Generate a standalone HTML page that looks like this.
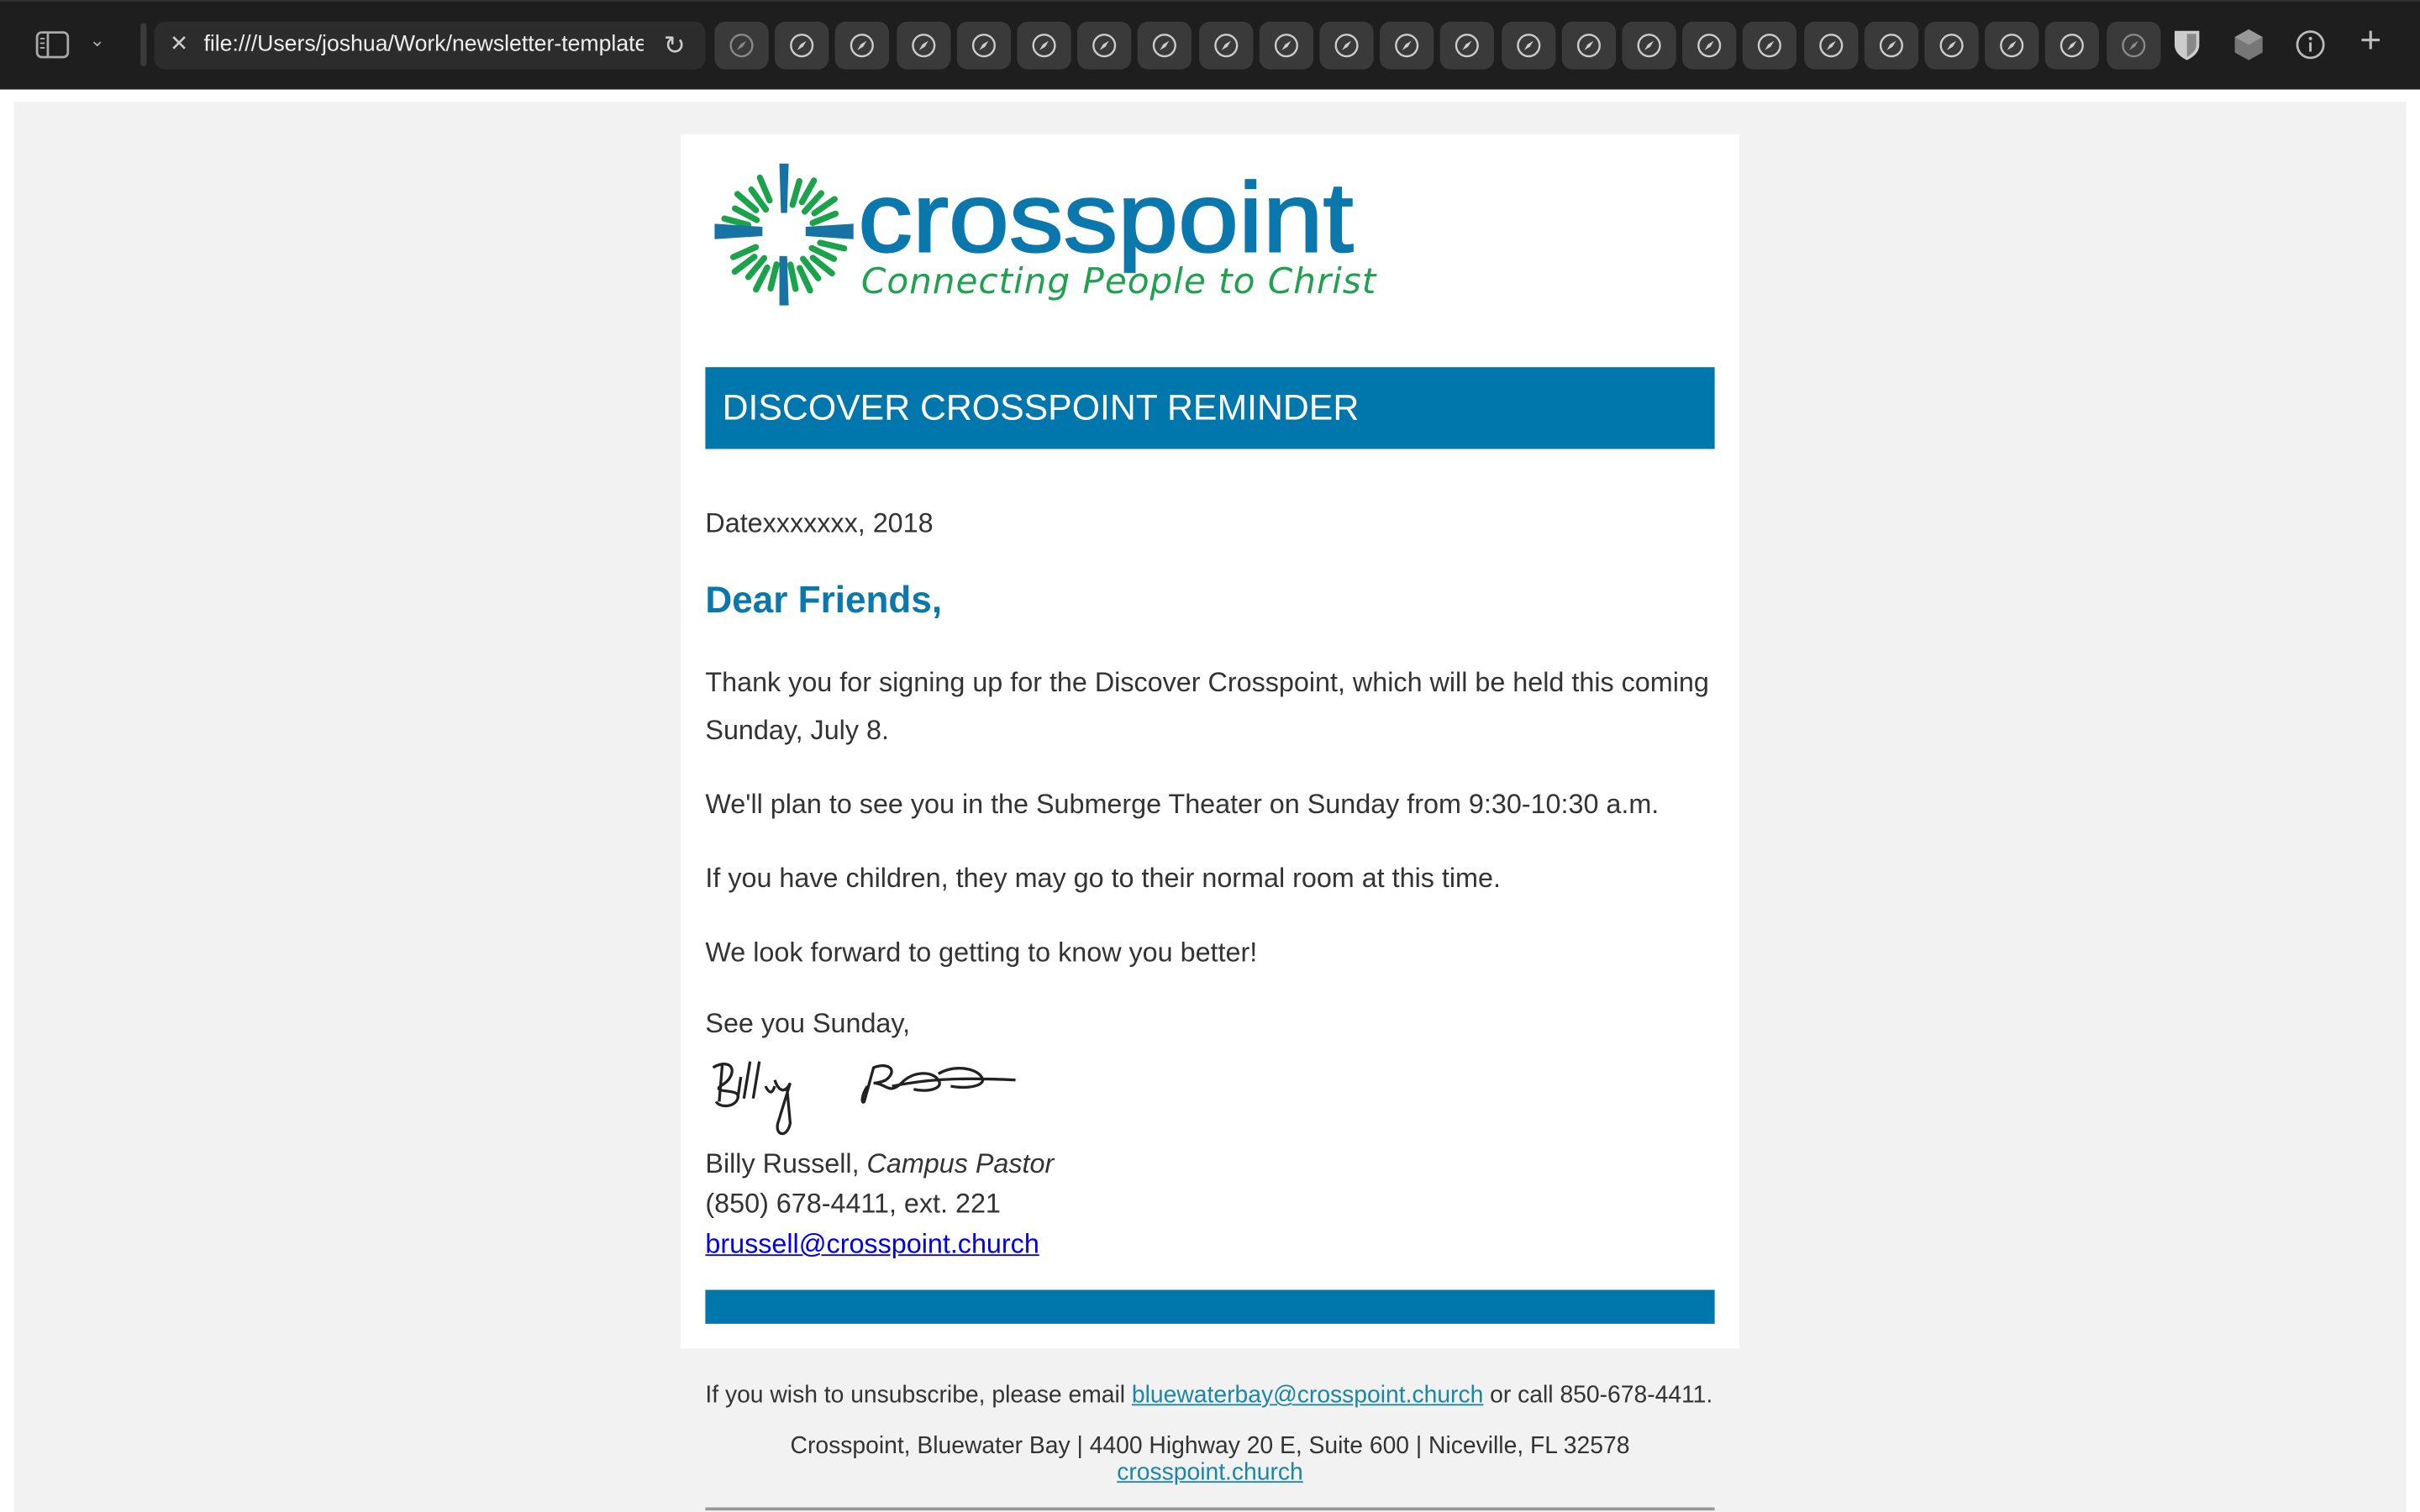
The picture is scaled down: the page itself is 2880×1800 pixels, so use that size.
<!DOCTYPE html>
<html><head><meta charset="utf-8"><style>
html,body{margin:0;padding:0;width:2880px;height:1800px;overflow:hidden;background:#fff}
#w{position:absolute;left:0;top:0;width:1568px;height:980px;transform:scale(1.836735);transform-origin:0 0;font-family:"Liberation Sans",Arial,sans-serif}
.bar{position:absolute;left:0;top:0;width:1568px;height:57px;background:#1e1e1e;border-top:1px solid #333}
.url{position:absolute;left:100px;top:13px;width:357px;height:31px;background:#2c2c2c;border-radius:7px;color:#eee;font-size:14.5px;line-height:31px;white-space:nowrap}
.tab{position:absolute;top:13px;width:35px;height:31px;background:#3a3a3a;border-radius:7px}
.tab svg{position:absolute;left:9px;top:7px}
.page{position:absolute;left:9px;top:66px;width:1550px;height:914px;background:#f2f2f2}
.card{position:absolute;left:441px;top:87px;width:686px;height:787px;background:#fff}
.t{position:absolute;left:457px;color:#333;font-size:17.6px;white-space:nowrap}
</style></head><body><div id="w">
<div class="bar">
 <svg style="position:absolute;left:23px;top:19px" width="22" height="18" viewBox="0 0 22 18"><rect x="1" y="1" width="20" height="16" rx="3" fill="none" stroke="#aaa" stroke-width="1.5"/><line x1="8" y1="1" x2="8" y2="17" stroke="#aaa" stroke-width="1.5"/><line x1="3" y1="5" x2="6" y2="5" stroke="#aaa"/><line x1="3" y1="8" x2="6" y2="8" stroke="#aaa"/><line x1="3" y1="11" x2="6" y2="11" stroke="#aaa"/></svg>
 <div style="position:absolute;left:58px;top:18px;color:#aaa;font-size:12px">&#8964;</div>
 <div style="position:absolute;left:91px;top:14px;width:4px;height:28px;background:#3a3a3a;border-radius:2px"></div>
 <div class="url"><span style="position:absolute;left:10px;color:#ccc">✕</span><span style="position:absolute;left:32px;width:285px;overflow:hidden">file:///Users/joshua/Work/newsletter-template</span><span style="position:absolute;left:330px;color:#ccc;font-size:17px">↻</span></div>
 <div id="tabs"></div>
 <svg style="position:absolute;left:1407px;top:17px" width="20" height="22" viewBox="0 0 20 22"><path d="M2 2h16v9c0 5-4 8-8 10C6 19 2 16 2 11z" fill="#ccc"/><path d="M10 4h6v7c0 4-3 6-6 8z" fill="#888"/></svg>
 <svg style="position:absolute;left:1447px;top:17px" width="20" height="22" viewBox="0 0 20 22"><path d="M10 1l9 5v10l-9 5-9-5V6z" fill="#777"/><path d="M10 1l9 5-9 5-9-5z" fill="#999"/></svg>
 <svg style="position:absolute;left:1487px;top:18px" width="20" height="20" viewBox="0 0 20 20"><circle cx="10" cy="10" r="8.5" fill="none" stroke="#bbb" stroke-width="1.5"/><rect x="9.2" y="8.5" width="1.6" height="6" fill="#bbb"/><circle cx="10" cy="6" r="1.1" fill="#bbb"/></svg>
 <div style="position:absolute;left:1529px;top:12px;color:#bbb;font-size:24px;font-weight:300">+</div>
</div>
<div class="page"></div>
<div class="card"></div>
<!-- logo -->
<svg style="position:absolute;left:462px;top:104px" width="92" height="96" viewBox="0 0 92 96">
 <g id="rays"></g>
 <path d="M43 2h6l-1 32h-4z M43 62h5l1 32h-6z M1 41l31 2v6l-31 2z M60 43l31-2v10l-31-2z" fill="#1673a3"/>
</svg>
<div style="position:absolute;left:556px;top:104px;color:#0a78ad;font-size:64px;letter-spacing:0px;transform:scaleX(1.1);transform-origin:0 0;-webkit-text-stroke:1.2px #0a78ad">crosspoint</div>
<div style="position:absolute;left:558px;top:170px;color:#1fa14f;font-size:23px;font-style:italic;font-family:'DejaVu Sans','Liberation Sans',sans-serif;letter-spacing:0.5px;font-weight:300">Connecting People to Christ</div>
<div style="position:absolute;left:457px;top:238px;width:654px;height:53px;background:#0077ac;color:#fff;font-size:23.3px;line-height:53px;text-indent:11px">DISCOVER CROSSPOINT REMINDER</div>
<div class="t" style="top:329px">Datexxxxxxx, 2018</div>
<div class="t" style="top:376px;color:#0a78ad;font-size:24px;font-weight:bold">Dear Friends,</div>
<div class="t" style="top:427px;line-height:31px;white-space:normal;width:665px">Thank you for signing up for the Discover Crosspoint, which will be held this coming Sunday, July 8.</div>
<div class="t" style="top:511px">We'll plan to see you in the Submerge Theater on Sunday from 9:30-10:30 a.m.</div>
<div class="t" style="top:559px">If you have children, they may go to their normal room at this time.</div>
<div class="t" style="top:607px">We look forward to getting to know you better!</div>
<div class="t" style="top:653px">See you Sunday,</div>
<svg style="position:absolute;left:458px;top:684px" width="210" height="55" viewBox="0 0 210 55" fill="none" stroke="#222" stroke-width="1.8">
 <path d="M4 8c6-4 14-3 12 4s-10 8-8 10 14 0 12 6-12 6-14 2M10 6l-2 24M22 14l-2 14M28 4l-4 24M34 4l-4 24M38 20c2 4 4 6 6 0M44 16c2 6 6 10 10 2l-8 26c-2 8 6 10 8 0l-2-22"/>
 <path d="M104 20c-4 6-4 12-2 10l6-22c10-4 16 2 8 8-4 2-8 2-8 2 8 0 10 8 18 0 8-8 20-8 24-2s-8 8-16 6M120 20c20-4 40-6 80-4M150 12c10-6 24-4 28 2s-10 8-20 6"/>
</svg>
<div class="t" style="top:744px">Billy Russell, <i>Campus Pastor</i></div>
<div class="t" style="top:770px">(850) 678-4411, ext. 221</div>
<div class="t" style="top:796px;color:#0000ee;text-decoration:underline">brussell@crosspoint.church</div>
<div style="position:absolute;left:457px;top:836px;width:654px;height:22px;background:#0077ac"></div>
<div class="t" style="top:896px;font-size:15.4px">If you wish to unsubscribe, please email <span style="color:#1a86a8;text-decoration:underline">bluewaterbay@crosspoint.church</span> or call 850-678-4411.</div>
<div class="t" style="top:929px;font-size:15.4px;left:457px;width:654px;text-align:center">Crosspoint, Bluewater Bay | 4400 Highway 20 E, Suite 600 | Niceville, FL 32578</div>
<div class="t" style="top:946px;font-size:15.4px;left:457px;width:654px;text-align:center;color:#1a86a8;text-decoration:underline">crosspoint.church</div>
<div style="position:absolute;left:457px;top:977px;width:654px;height:2px;background:#999"></div>
</div>
<script>
var t='';for(var i=0;i<24;i++){var x=463+i*39.2;t+='<div class="tab" style="left:'+x+'px"><svg width="17" height="17" viewBox="0 0 17 17"><circle cx="8.5" cy="8.5" r="7" fill="none" stroke="'+(i==0||i==23?'#888':'#ccc')+'" stroke-width="1.3"/><path d="M11.5 5.5L9.3 9.3 5.5 11.5 7.7 7.7z" fill="'+(i==0||i==23?'#888':'#ccc')+'"/></svg></div>';}
document.getElementById('tabs').innerHTML=t;
var r='';for(var a=0;a<360;a+=13){if(a%90<12||a%90>78)continue;var rad=a*Math.PI/180,c=Math.cos(rad),s=Math.sin(rad),r1=(a%26?24:20),r2=(a%26?40:36);
r+='<line x1="'+(46+c*r1)+'" y1="'+(48+s*r1)+'" x2="'+(46+c*r2)+'" y2="'+(48+s*r2)+'" stroke="#1aa34a" stroke-width="4" stroke-linecap="round"/>';}
document.getElementById('rays').innerHTML=r;
</script>
</body></html>
